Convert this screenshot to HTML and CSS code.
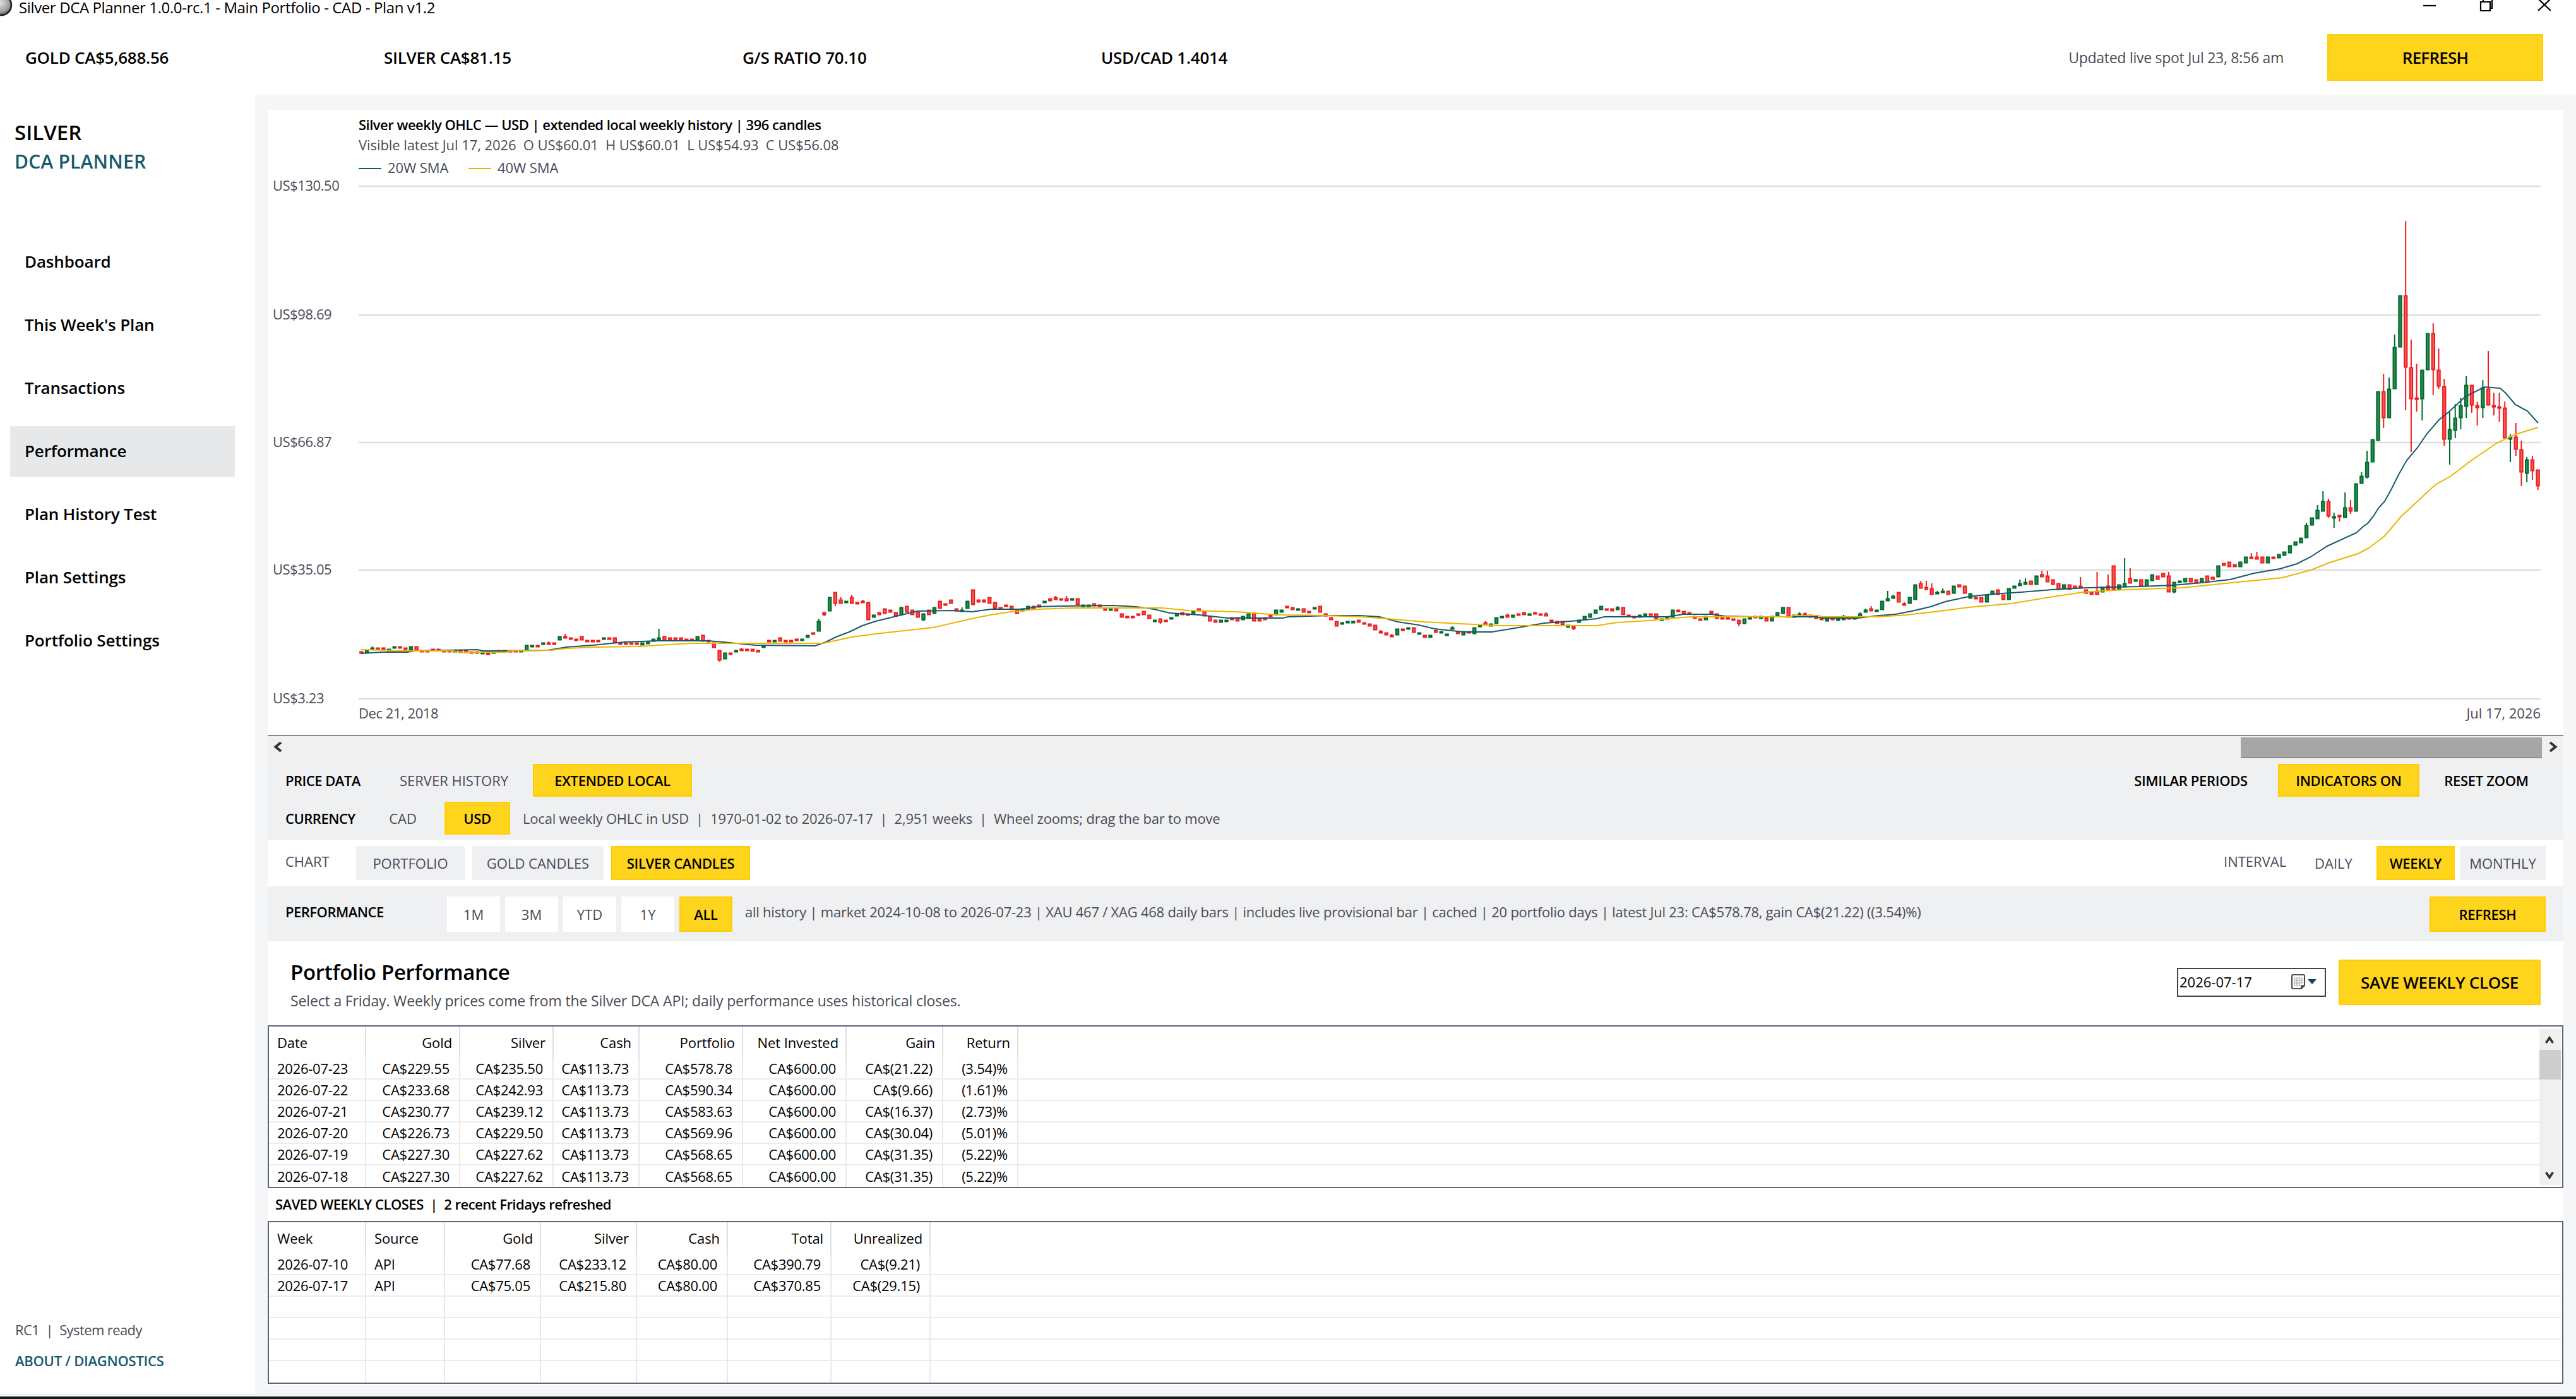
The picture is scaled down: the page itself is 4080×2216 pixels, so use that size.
FILE: index.html
```html
<!DOCTYPE html>
<html>
<head>
    <meta charset="utf-8">
    <title>Silver DCA Planner</title>
    <link rel="stylesheet" href="styles.css">
</head>
<body>
    <div class="titlebar">
        <svg class="app-icon" width="24" height="28" viewBox="0 0 24 28">
            <defs>
                <radialGradient id="coin" cx="0.45" cy="0.4" r="0.6">
                    <stop offset="0" stop-color="#e2e2e2"/>
                    <stop offset="0.75" stop-color="#9c9c9c"/>
                    <stop offset="1" stop-color="#5a5a5a"/>
                </radialGradient>
            </defs>
            <circle cx="2" cy="8" r="16" fill="url(#coin)" stroke="#1c1c1c" stroke-width="2.5"/>
        </svg>
        <span class="window-title">Silver DCA Planner 1.0.0-rc.1 - Main Portfolio - CAD - Plan v1.2</span>
        <svg class="window-buttons" width="210" height="24" viewBox="0 0 210 24" fill="none" stroke="#000" stroke-width="2.2">
            <path d="M8 9H28"/>
            <path d="M99 3H114V17H99Z M103 3V-1H117V13H114"/>
            <path d="M190 -2L210 17M210 -2L190 17"/>
        </svg>
    </div>

    <div class="topbar">
        <div class="quote">GOLD CA$5,688.56</div>
        <div class="quote">SILVER CA$81.15</div>
        <div class="quote">G/S RATIO 70.10</div>
        <div class="quote">USD/CAD 1.4014</div>
        <div class="updated">Updated live spot Jul 23, 8:56 am</div>
        <button class="btn on refresh-top">REFRESH</button>
    </div>

    <div class="main">
        <div class="sidebar">
            <div class="brand">SILVER</div>
            <div class="brand-sub">DCA PLANNER</div>
            <div class="nav">
                <a class="nav-item">Dashboard</a>
                <a class="nav-item">This Week's Plan</a>
                <a class="nav-item">Transactions</a>
                <a class="nav-item active">Performance</a>
                <a class="nav-item">Plan History Test</a>
                <a class="nav-item">Plan Settings</a>
                <a class="nav-item">Portfolio Settings</a>
            </div>
            <div class="sidebar-footer">
                <div class="status">RC1 &nbsp;|&nbsp; System ready</div>
                <div class="about">ABOUT / DIAGNOSTICS</div>
            </div>
        </div>

        <div class="content">
            <div class="card">
                <svg class="chart" id="chart" width="3636" height="990" viewBox="424 174 3636 990">
                    <g class="grid">
                        <path d="M568 295H4024M568 499H4024M568 701H4024M568 903H4024M568 1107H4024"/>
                    </g>
                    <g class="axis">
                        <text x="432" y="302">US$130.50</text>
                        <text x="432" y="506">US$98.69</text>
                        <text x="432" y="708">US$66.87</text>
                        <text x="432" y="910">US$35.05</text>
                        <text x="432" y="1114">US$3.23</text>
                        <text x="568" y="1138">Dec 21, 2018</text>
                        <text class="end" x="4024" y="1138">Jul 17, 2026</text>
                    </g>
                    <text class="chart-title" x="568" y="206">Silver weekly OHLC — USD | extended local weekly history | 396 candles</text>
                    <text class="chart-sub" x="568" y="238">Visible latest Jul 17, 2026&nbsp; O US$60.01&nbsp; H US$60.01&nbsp; L US$54.93&nbsp; C US$56.08</text>
                    <path class="sma20" d="M568 267H604"/>
                    <text class="legend" x="614" y="274">20W SMA</text>
                    <path class="sma40" d="M742 267H778"/>
                    <text class="legend" x="788" y="274">40W SMA</text>
                    <g id="candles"></g>
                    <polyline class="sma20" points="572,1035 605,1033 645,1033 657,1031 756,1029 765,1031 802,1031 868,1030 897,1025 939,1022 989,1017 1042,1015 1121,1015 1146,1017 1196,1022 1291,1023 1308,1017 1324,1009 1345,1001 1366,991 1387,984 1428,974 1453,968 1507,967 1540,969 1569,965 1619,965 1643,961 1685,960 1762,959 1799,961 1828,965 1853,971 1899,974 1945,979 2032,979 2040,977 2106,975 2152,975 2185,977 2214,985 2247,990 2272,996 2318,1001 2363,1001 2405,994 2446,987 2488,984 2529,980 2541,977 2641,977 2666,973 2711,973 2732,976 2778,977 2877,977 2885,979 2943,979 2977,975 3002,973 3028,968 3058,961 3081,953 3118,945 3156,941 3201,938 3250,934 3306,931 3389,929 3442,927 3487,923 3532,918 3570,908 3611,901 3638,893 3660,882 3686,865 3732,844 3743,834 3750,829 3759,818 3767,805 3777,794 3788,774 3799,752 3812,729 3829,709 3844,687 3863,665 3878,653 3905,628 3935,613 3960,615 3969,623 3984,641 4003,651 4020,670"/>
                    <polyline class="sma40" points="572,1029 616,1030 620,1031 719,1031 723,1033 802,1033 806,1031 873,1030 897,1027 943,1025 1013,1024 1059,1021 1096,1019 1304,1019 1349,1009 1387,1004 1432,999 1478,994 1544,979 1569,974 1602,969 1643,965 1700,963 1841,963 1882,967 1957,969 2027,974 2098,975 2156,977 2197,980 2255,985 2313,988 2376,991 2529,991 2562,986 2612,983 2653,979 2678,977 2836,977 2840,975 2881,975 2885,977 2975,977 3020,974 3081,967 3118,962 3186,956 3246,946 3299,938 3367,934 3457,931 3525,924 3577,919 3615,915 3660,903 3690,891 3735,877 3752,868 3777,849 3803,818 3829,794 3857,768 3882,754 3912,731 3954,702 3984,688 4020,677"/>
                </svg>

                <div class="hscroll">
                    <svg width="32" height="34" viewBox="0 0 32 34" fill="none" stroke="#333" stroke-width="4"><path d="M21 8L12.500 15L21 22"/></svg>
                    <div class="hthumb"></div>
                    <svg width="34" height="34" viewBox="0 0 34 34" fill="none" stroke="#333" stroke-width="4"><path d="M13 8L21.500 15L13 22"/></svg>
                </div>

                <div class="panel">
                    <div class="row">
                        <span class="label strong w148">PRICE DATA</span>
                        <button class="btn flat w238">SERVER HISTORY</button>
                        <button class="btn on w252 ml6">EXTENDED LOCAL</button>
                        <span class="spacer"></span>
                        <button class="btn flat dark w252">SIMILAR PERIODS</button>
                        <button class="btn on w224 ml12">INDICATORS ON</button>
                        <button class="btn flat dark w188 ml12">RESET ZOOM</button>
                    </div>
                    <div class="row">
                        <span class="label strong w134">CURRENCY</span>
                        <button class="btn flat w104">CAD</button>
                        <button class="btn on w104 ml14">USD</button>
                        <span class="desc">Local weekly OHLC in USD &nbsp;|&nbsp; 1970-01-02 to 2026-07-17 &nbsp;|&nbsp; 2,951 weeks &nbsp;|&nbsp; Wheel zooms; drag the bar to move</span>
                    </div>
                </div>

                <div class="row chart-row">
                    <span class="label w112 up">CHART</span>
                    <button class="btn gray w172">PORTFOLIO</button>
                    <button class="btn gray w208 ml12">GOLD CANDLES</button>
                    <button class="btn on w220 ml12">SILVER CANDLES</button>
                    <span class="spacer"></span>
                    <span class="label w114 up">INTERVAL</span>
                    <button class="btn flat w120">DAILY</button>
                    <button class="btn on w124 ml8">WEEKLY</button>
                    <button class="btn gray w136 ml8">MONTHLY</button>
                </div>

                <div class="row perf-row">
                    <span class="label strong w256 up">PERFORMANCE</span>
                    <div class="ranges">
                        <button class="btn white">1M</button>
                        <button class="btn white">3M</button>
                        <button class="btn white">YTD</button>
                        <button class="btn white">1Y</button>
                        <button class="btn on">ALL</button>
                    </div>
                    <span class="desc tight up">all history | market 2024-10-08 to 2026-07-23 | XAU 467 / XAG 468 daily bars | includes live provisional bar | cached | 20 portfolio days | latest Jul 23: CA$578.78, gain CA$(21.22) ((3.54)%)</span>
                    <span class="spacer"></span>
                    <button class="btn on w184">REFRESH</button>
                </div>

                <div class="head">
                    <div class="head-text">
                        <div class="head-title">Portfolio Performance</div>
                        <div class="head-sub">Select a Friday. Weekly prices come from the Silver DCA API; daily performance uses historical closes.</div>
                    </div>
                    <div class="date">
                        <span>2026-07-17</span>
                        <svg width="48" height="30" viewBox="0 0 48 30">
                            <path d="M6 3H22Q24 3 24 5V20L19 25H6Q4 25 4 23V5Q4 3 6 3Z" fill="#fff" stroke="#5c4a4a" stroke-width="2.200"/>
                            <path d="M8 8H20M8 12H20M8 16H20M8 20H18M8 8V20M12 8V20M16 8V20M20 8V17" stroke="#9aa5b5" stroke-width="1.200" fill="none"/>
                            <path d="M24 19L18 25V20Z" fill="#4a3c3c"/>
                            <path d="M29 10H43L36 18Z" fill="#1f3a6e"/>
                        </svg>
                    </div>
                    <button class="btn on save">SAVE WEEKLY CLOSE</button>
                </div>

                <div class="grid-box">
                    <table>
                        <colgroup>
                            <col class="w154"><col class="w149"><col class="w148"><col class="w136"><col class="w164"><col class="w164"><col class="w153"><col class="w119"><col>
                        </colgroup>
                        <thead>
                            <tr><th class="left">Date</th><th>Gold</th><th>Silver</th><th>Cash</th><th>Portfolio</th><th>Net Invested</th><th>Gain</th><th>Return</th><th></th></tr>
                        </thead>
                        <tbody>
                            <tr><td class="left">2026-07-23</td><td>CA$229.55</td><td>CA$235.50</td><td>CA$113.73</td><td>CA$578.78</td><td>CA$600.00</td><td>CA$(21.22)</td><td>(3.54)%</td><td></td></tr>
                            <tr><td class="left">2026-07-22</td><td>CA$233.68</td><td>CA$242.93</td><td>CA$113.73</td><td>CA$590.34</td><td>CA$600.00</td><td>CA$(9.66)</td><td>(1.61)%</td><td></td></tr>
                            <tr><td class="left">2026-07-21</td><td>CA$230.77</td><td>CA$239.12</td><td>CA$113.73</td><td>CA$583.63</td><td>CA$600.00</td><td>CA$(16.37)</td><td>(2.73)%</td><td></td></tr>
                            <tr><td class="left">2026-07-20</td><td>CA$226.73</td><td>CA$229.50</td><td>CA$113.73</td><td>CA$569.96</td><td>CA$600.00</td><td>CA$(30.04)</td><td>(5.01)%</td><td></td></tr>
                            <tr><td class="left">2026-07-19</td><td>CA$227.30</td><td>CA$227.62</td><td>CA$113.73</td><td>CA$568.65</td><td>CA$600.00</td><td>CA$(31.35)</td><td>(5.22)%</td><td></td></tr>
                            <tr><td class="left">2026-07-18</td><td>CA$227.30</td><td>CA$227.62</td><td>CA$113.73</td><td>CA$568.65</td><td>CA$600.00</td><td>CA$(31.35)</td><td>(5.22)%</td><td></td></tr>
                        </tbody>
                    </table>
                    <div class="vscroll">
                        <svg width="34" height="34" viewBox="0 0 34 34" fill="none" stroke="#333" stroke-width="3.600"><path d="M10.500 23L16 15L21.500 23"/></svg>
                        <div class="vthumb"></div>
                        <svg width="34" height="34" viewBox="0 0 34 34" fill="none" stroke="#333" stroke-width="3.600"><path d="M10.500 14L16 22L21.500 14"/></svg>
                    </div>
                </div>

                <div class="saved">SAVED WEEKLY CLOSES &nbsp;|&nbsp; 2 recent Fridays refreshed</div>

                <div class="grid-box">
                    <table>
                        <colgroup>
                            <col class="w154"><col class="w125"><col class="w152"><col class="w152"><col class="w144"><col class="w164"><col class="w157"><col>
                        </colgroup>
                        <thead>
                            <tr><th class="left">Week</th><th class="left">Source</th><th>Gold</th><th>Silver</th><th>Cash</th><th>Total</th><th>Unrealized</th><th></th></tr>
                        </thead>
                        <tbody>
                            <tr><td class="left">2026-07-10</td><td class="left">API</td><td>CA$77.68</td><td>CA$233.12</td><td>CA$80.00</td><td>CA$390.79</td><td>CA$(9.21)</td><td></td></tr>
                            <tr><td class="left">2026-07-17</td><td class="left">API</td><td>CA$75.05</td><td>CA$215.80</td><td>CA$80.00</td><td>CA$370.85</td><td>CA$(29.15)</td><td></td></tr>
                            <tr><td></td><td></td><td></td><td></td><td></td><td></td><td></td><td></td></tr>
                            <tr><td></td><td></td><td></td><td></td><td></td><td></td><td></td><td></td></tr>
                            <tr><td></td><td></td><td></td><td></td><td></td><td></td><td></td><td></td></tr>
                            <tr><td></td><td></td><td></td><td></td><td></td><td></td><td></td><td></td></tr>
                        </tbody>
                    </table>
                </div>
            </div>
        </div>
    </div>
    <div class="taskbar"></div>

    <script src="chart.js"></script>
</body>
</html>
```
FILE: styles.css
```css
* {
    box-sizing: border-box;
}
body {
    margin: 0;
    width: 4080px;
    height: 2216px;
    overflow: hidden;
    display: flex;
    flex-direction: column;
    background-color: #ffffff;
    color: #000000;
    font-family: "Open Sans", "Noto Sans", sans-serif;
    font-size: 22px;
    line-height: 32px;
}

/* title bar */
.titlebar {
    height: 24px;
    display: flex;
    align-items: center;
    padding-right: 40px;
}
.app-icon {
    align-self: flex-start;
    flex: none;
    margin-right: 6px;
}
.window-title {
    flex: 1;
    font-size: 24px;
    line-height: 24px;
    letter-spacing: -0.38px;
}
.window-buttons {
    align-self: flex-start;
}

/* quotes */
.topbar {
    height: 126px;
    padding: 30px 52px 22px 40px;
    display: flex;
    align-items: center;
}
.quote {
    width: 568px;
    font-size: 26px;
    font-weight: 650;
    letter-spacing: -0.25px;
}
.updated {
    margin-left: auto;
    margin-right: 69px;
    font-size: 23px;
    letter-spacing: -0.27px;
    color: #4b4b55;
}

.main {
    height: 2058px;
    display: flex;
}

/* sidebar */
.sidebar {
    width: 404px;
    padding: 37px 16px 28px;
    display: flex;
    flex-direction: column;
}
.brand, .brand-sub {
    padding-left: 7px;
    line-height: 46px;
    font-weight: 650;
}
.brand {
    font-size: 33px;
}
.brand-sub {
    font-size: 30px;
    color: #17596b;
    font-weight: 600;
    letter-spacing: 0.2px;
}
.nav {
    margin-top: 96px;
    width: 356px;
    display: flex;
    flex-direction: column;
    gap: 20px;
}
.nav-item {
    height: 80px;
    padding-left: 23px;
    line-height: 78px;
    font-size: 26px;
    font-weight: 650;
    letter-spacing: -0.15px;
}
.nav-item.active {
    background-color: #e7e8ea;
}
.sidebar-footer {
    margin-top: auto;
    padding-left: 8px;
    line-height: 49px;
}
.status {
    color: #4b4b55;
    letter-spacing: -0.6px;
}
.about {
    color: #17596b;
    font-weight: 650;
    letter-spacing: -0.25px;
}

/* content */
.content {
    flex: 1;
    padding: 24px 20px 14px 20px;
    background-color: #f5f6f8;
}
.card {
    height: 2020px;
    background-color: #ffffff;
}
.chart {
    display: block;
}
.grid path {
    stroke: #dcdde1;
    stroke-width: 2.5;
}
.axis, .legend {
    fill: #4b4b55;
    font-size: 22px;
    letter-spacing: -0.45px;
}
.legend {
    letter-spacing: -0.1px;
}
.end {
    text-anchor: end;
    letter-spacing: 0;
}
.chart-title {
    font-size: 22px;
    font-weight: 650;
    letter-spacing: -0.5px;
}
.chart-sub {
    font-size: 22px;
    fill: #4b4b55;
    letter-spacing: -0.07px;
}
.sma20, .sma40 {
    fill: none;
    stroke-width: 2;
}
.sma20 {
    stroke: #17596b;
}
.sma40 {
    stroke: #edb400;
}
.up-candle {
    fill: #2b8c54;
    stroke: #00692c;
}
.down-candle {
    fill: #f45c58;
    stroke: #ee1c1f;
}
.up-candle, .down-candle {
    stroke-width: 2;
}
.hscroll {
    height: 38px;
    border-top: 2px solid #878787;
    background-color: #f0f0f0;
    display: flex;
    justify-content: space-between;
    padding-top: 2px;
}
.hthumb {
    width: 477px;
    margin-left: auto;
    height: 33px;
    background-color: #a6a6a6;
    border-bottom: 2px solid #8f8f8f;
}

/* control rows */
.panel {
    background-color: #eff0f2;
    padding: 8px 0;
    display: flex;
    flex-direction: column;
    gap: 8px;
}
.row {
    display: flex;
    align-items: center;
    padding: 0 28px;
    white-space: nowrap;
}
.spacer {
    flex: 1;
}
.label {
    color: #4b4b55;
}
.label.strong {
    color: #000000;
    font-weight: 650;
    letter-spacing: -0.5px;
}
.up {
    padding-bottom: 7px;
}
.desc {
    margin-left: 20px;
    color: #4b4b55;
    letter-spacing: -0.19px;
}
.desc.tight {
    letter-spacing: -0.24px;
}
.btn {
    height: 52px;
    padding: 0;
    border: none;
    font-family: inherit;
    font-size: 22px;
    color: #4b4b55;
    background-color: transparent;
}
.btn.on {
    background-color: #ffd41d;
    border: 2px solid #ffcd05;
    color: #000000;
    font-weight: 650;
    letter-spacing: -0.3px;
}
.btn.dark {
    color: #000000;
    font-weight: 650;
    letter-spacing: -0.3px;
}
.btn.gray {
    background-color: #eff0f2;
}
.btn.white {
    background-color: #ffffff;
}
.btn.refresh-top {
    width: 342px;
    height: 74px;
    font-size: 26px;
    letter-spacing: -0.8px;
}
.chart-row {
    height: 74px;
}
.chart-row .btn {
    height: 54px;
}
.perf-row {
    height: 87px;
    background-color: #eff0f2;
}
.perf-row .btn {
    height: 56px;
}
.ranges {
    display: flex;
    gap: 8px;
}
.ranges .btn {
    width: 84px;
}

.ml6 { margin-left: 6px; }
.ml8 { margin-left: 8px; }
.ml12 { margin-left: 12px; }
.ml14 { margin-left: 14px; }
.w104 { width: 104px; }
.w112 { width: 112px; }
.w114 { width: 114px; }
.w119 { width: 119px; }
.w120 { width: 120px; }
.w124 { width: 124px; }
.w125 { width: 125px; }
.w134 { width: 134px; }
.w136 { width: 136px; }
.w144 { width: 144px; }
.w148 { width: 148px; }
.w149 { width: 149px; }
.w152 { width: 152px; }
.w153 { width: 153px; }
.w154 { width: 154px; }
.w157 { width: 157px; }
.w164 { width: 164px; }
.w172 { width: 172px; }
.w184 { width: 184px; }
.w188 { width: 188px; }
.w208 { width: 208px; }
.w220 { width: 220px; }
.w224 { width: 224px; }
.w238 { width: 238px; }
.w252 { width: 252px; }
.w256 { width: 256px; }

/* portfolio performance header */
.head {
    height: 133px;
    padding: 0 36px 3px;
    display: flex;
    align-items: center;
}
.head-text {
    flex: 1;
    padding-top: 8px;
}
.head-title {
    font-size: 33px;
    font-weight: 650;
    line-height: 50px;
    letter-spacing: -0.3px;
}
.head-sub {
    font-size: 23px;
    line-height: 40px;
    letter-spacing: -0.15px;
    color: #4b4b55;
}
.date {
    width: 236px;
    height: 46px;
    margin-right: 20px;
    padding: 0 8px 0 2px;
    border: 2px solid #444444;
    display: flex;
    align-items: center;
    justify-content: space-between;
}
.date span {
    padding-bottom: 2px;
}
.btn.save {
    width: 320px;
    height: 72px;
    font-size: 26px;
    letter-spacing: -0.3px;
}

/* tables */
.grid-box {
    height: 258px;
    border: 2px solid #5f6577;
    padding: 0 2px 0 0;
    display: flex;
    overflow: hidden;
}
table {
    flex: 1;
    width: 100%;
    table-layout: fixed;
    border-collapse: separate;
    border-spacing: 0;
    letter-spacing: -0.26px;
}
th, td {
    padding: 0;
    text-align: right;
    border-right: 2px solid #e9e9ea;
    white-space: nowrap;
}
th {
    height: 50px;
    padding-right: 11px;
    font-weight: 400;
    letter-spacing: -0.1px;
    border-color: #dedee0;
}
td {
    height: 34px;
    padding-right: 15px;
    line-height: 32px;
    border-bottom: 2px solid #ececed;
}
th:last-child, td:last-child {
    border-right: none;
}
tr:last-child td {
    border-bottom: none;
}
.left {
    padding-left: 13px;
    text-align: left;
}
.vscroll {
    width: 34px;
    margin: 3px 0;
    background-color: #f0f0f0;
    display: flex;
    flex-direction: column;
}
.vscroll svg:last-child {
    margin-top: auto;
}
.vthumb {
    height: 47px;
    background-color: #cdcdcd;
}
.saved {
    height: 52px;
    padding-left: 12px;
    line-height: 50px;
    font-weight: 650;
    letter-spacing: -0.5px;
}
.taskbar {
    height: 8px;
    border-top: 2px solid #f0f0f0;
    border-bottom: 4px solid #161a1a;
}
```
FILE: chart.js
```js
// one entry per week: colour + body top,body bottom (or high,top,bottom,low)
const weeks = `r91,92 g90,92 g87,88,89,89 r88,89 r88,89 g89,90 g87,88 r87,88 r88,89 g87,90 r87,90 r90,91 r90,91 r89,90 r89,90 r90,91 r90,91 g90,91 r90,92 r90,92 r91,92 r91,92 g91,93 r92,93 g91,92 r90,91 g90,91 r90,91 r90,91 g90,91
g86,90 g86,87 r86,87 g84,85 r83,84,85,85 r84,85 g79,82 r77,79,80,80 r80,81 r81,82 r79,82 r82,83 r82,83 r82,83 g80,81 r80,81 r80,84 r84,85 r84,85 r84,85 r84,85 g84,86 g83,85 g81,83 g73,80,82,82 r79,82 r80,82 r80,82 r80,82 r81,82
r81,82 g79,82 r78,83 r82,83 r84,88 r90,90,98,99 g92,97 r92,93 g90,91 r88,89,90,90 r89,90 r89,91 r90,91 g86,88 r82,83 g82,83 r80,83 r82,83 r82,83 r81,82 g81,82 g78,80 r76,77 g65,67,75,75 r60,60,62,63 g48,59 r44,44,53,55 r48,50,53,53 g51,52 r46,48,53,53
r52,53 r50,51,52,52 r52,66 g62,64 r60,62 r57,61 r58,60 r60,63 g56,62 r55,60 r58,62 r60,64 g61,61,66,67 r58,62 g56,61 r51,57 r53,54 r50,53 r57,59 g56,58,59,59 g51,57 r42,54 r50,52 r50,52 r48,53 r52,57 r56,57 r54,55 r55,58 r58,61
g57,59 g55,58 r55,57 r54,56 g51,52 r49,51 r47,48,50,50 r49,50 r47,49,51,51 g49,50 r49,54 g54,55 g54,55 r53,55 r54,55 r57,58 g57,58 r57,59 r61,64 r63,64 r63,64 r61,62 r59,62 r62,65 g66,67 r65,65,68,69 r66,67 g64,65 g61,63 r60,62
r61,62 g59,61 r57,59 r59,63 r63,67 r66,68 g66,68 g66,67 r64,66 r64,67 g63,66 g61,65 r61,67 r65,67 r64,66 r62,63 g58,62 g58,60 r55,56 r56,58 g57,58 r57,60 r59,60 g56,57 r55,60 r61,63 r64,66 r67,71 g68,69 g67,68
g67,68 r66,68 r68,69 r69,71 r70,74 r74,75,76,76 r76,78 r77,78,79,79 g73,78 r73,74 g72,73 r72,76 g76,77 r78,80 g78,80 r74,76 g75,76 g77,78 g71,72,73,73 r75,77 g75,78 r75,76 g72,77 g70,71 r67,68,70,70 g69,71 g64,69 g63,64 r61,62,64,64 g62,64
r61,62 r60,62 g61,62 r60,61 r61,62 r60,61,63,63 r66,67 r67,69 r67,70 g70,72 r70,71,73,74 g66,68 g63,66 g61,64 g58,61 g55,58 r57,58 r57,59 g55,56,58,58 r56,62 r62,63 r63,64 g62,64 g61,63 r61,62 r61,65 g65,66 g64,65 g58,64 r58,59
r59,61 r60,61 r63,65 r65,66 g63,66 r59,61 r61,65 r64,65 r64,65 r65,66 r66,66,69,71 g65,69 g64,65 r63,64 g63,65 r64,67 g63,67 g60,63 g56,61 r56,64 g62,64 g60,61,62,62 r60,61,62,62 r62,64 r63,65 r64,66 g65,67 r64,66 g65,66 g62,63,66,66
r64,65 g64,65 g60,61,64,64 g57,58,60,60 r55,57,59,59 g58,59 g51,58 g43,49,51,51 g46,47,49,49 r44,52 r52,53,54,54 g48,53 g38,50 r35,37,41,41 r35,40,42,42 r37,41,46,46 g43,44,45,45 g41,43,44,44 r43,46 g39,45 r38,40 r39,45 g45,49 r48,49 r48,52 g46,52 g43,46 r42,46 r46,50 g41,50
g39,41 g34,37,39,39 g33,36,38,38 r35,38 g31,38 r27,30,32,32 r27,31,36,36 r34,38 r37,42 g38,41 r38,42 r39,41 r32,39,41,41 r42,45 r44,46 r28,43,46,46 g40,44 r30,39,42,42 r23,42 g38,42 g17,37,40,40 r25,33,37,37 g34,35 r34,39 g34,39 g30,35 r31,34 r29,32 r28,31,44,44 g36,36,44,45
g35,36 g33,36 r33,36 r34,37 g33,36 r31,36 r32,34 g23,32 r21,23 r20,24 r22,24 g20,24 g16,21 r13,16,17,17 r12,16,18,18 r16,21 g16,21 r16,17 g14,17 g12,15 g7,13 g4,7 g1,5 g-11,-9,1,1 g-15,-9 g-25,-21,-14,-14 g-36,-28,-20,-20 r-30,-28,-16,-15 g-19,-16,-15,-7 r-17,-17,-16,-12
g-35,-23,-15,-15 r-29,-23,-20,-18 g-42,-20 g-51,-48,-42,-42 g-68,-59,-47,-46 g-77,-59 g-115,-76 r-129,-115,-94,-86 g-126,-117,-94,-94 g-160,-150,-117,-117 g-191,-150 r-250,-191,-134,-100 r-156,-134,-109,-67 r-137,-110,-109,-99 g-132,-132,-109,-92 g-161,-132 r-169,-161,-132,-112 r-149,-132,-119,-117 r-125,-119,-77,-72 g-99,-85,-77,-57 g-105,-94,-84,-78 g-110,-104,-94,-85 g-127,-120,-103,-94 r-120,-120,-104,-98 r-107,-104,-102,-88 g-124,-118,-102,-94 r-147,-117,-104,-104 r-114,-104,-103,-96 r-114,-103,-102,-91 r-107,-102,-78,-78
g-81,-79,-77,-59 r-90,-79,-69,-64 r-76,-69,-51,-40 g-63,-61,-50,-43 r-64,-61,-52,-45 r-53,-53,-40,-37`.split(/\s+/);

const y = v => 850 + v * 2;
const step = 3456 / weeks.length;
let svg = '';

weeks.forEach((week, i) => {
    const cls = week[0] === 'g' ? 'up-candle' : 'down-candle';
    let v = week.slice(1).split(',').map(Number);
    if (v.length === 2) v = [v[0], v[0], v[1], v[1]];
    const x = 568 + (i + 0.5) * step;
    const h = Math.max(2, y(v[2]) - y(v[1]) - 1);
    svg += `<path class="${cls}" d="M${x} ${y(v[0])}V${y(v[3])}"/>`;
    svg += `<rect class="${cls}" x="${x - 2.2}" y="${y(v[1]) + 0.5}" width="4.4" height="${h}"/>`;
});

document.getElementById('candles').innerHTML = svg;
```
